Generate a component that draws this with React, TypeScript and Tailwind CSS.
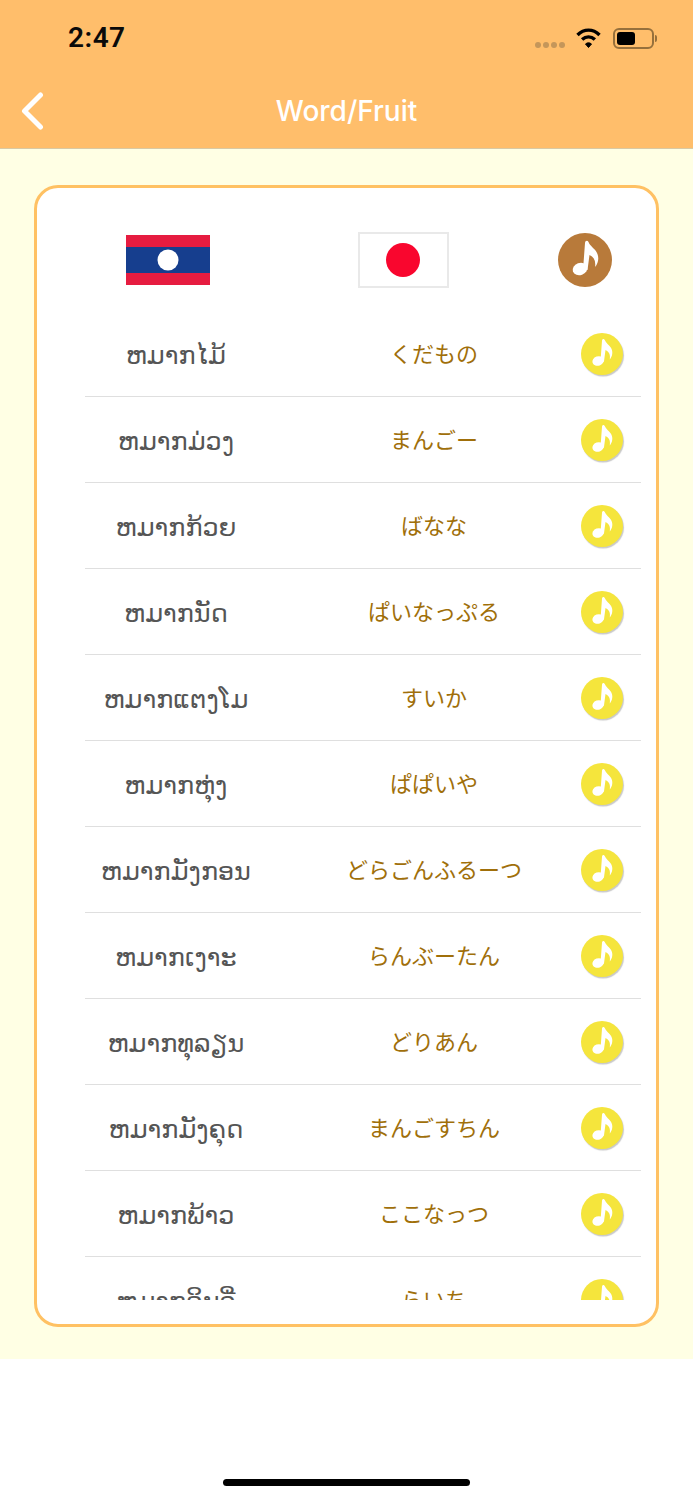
import React from "react";

const WORDS: [string, string][] = [
  ["ຫມາກໄມ້", "くだもの"],
  ["ຫມາກມ່ວງ", "まんごー"],
  ["ຫມາກກ້ວຍ", "ばなな"],
  ["ຫມາກນັດ", "ぱいなっぷる"],
  ["ຫມາກແຕງໂມ", "すいか"],
  ["ຫມາກຫຸ່ງ", "ぱぱいや"],
  ["ຫມາກມັງກອນ", "どらごんふるーつ"],
  ["ຫມາກເງາະ", "らんぶーたん"],
  ["ຫມາກທຸລຽນ", "どりあん"],
  ["ຫມາກມັງຄຸດ", "まんごすちん"],
  ["ຫມາກພ້າວ", "ここなっつ"],
  ["ຫມາກລິນຈີ່", "らいち"],
];

const Note = ({ className }: { className: string }) => (
  <svg viewBox="0 0 54 54" className={className} fill="#fff">
    <ellipse cx="22" cy="36" rx="7.5" ry="6" transform="rotate(-20 22 36)" />
    <path d="M25 37 L27 10 C27.2 7.5 29.5 7 30.5 9 C32 13 36 15 38.5 19 C41.5 24 40.5 30 37 34 C38 28 36 24 31.5 22 L29.5 37 Z" />
  </svg>
);

function Row({ lao, jp }: { lao: string; jp: string }) {
  return (
    <div className="h-[86px] shrink-0 ml-[48px] w-[556px] border-b border-[#dfdfdf] flex items-start">
      <div className="w-[182px] pt-[22px] text-center text-[25.5px] leading-[44px] text-[#555555] font-['DejaVu_Sans',sans-serif] whitespace-nowrap">
        {lao}
      </div>
      <div className="w-[314px] pl-[20px] pt-[24px] text-center text-[22px] leading-[34px] text-[#a06f0a] font-['Noto_Sans_CJK_JP',sans-serif] whitespace-nowrap">
        {jp}
      </div>
      <div className="mt-[22px] w-[42px] h-[42px] rounded-full bg-[#f5e53c] shadow-[1px_1.5px_1px_#c9c9c9]">
        <Note className="w-[42px] h-[42px]" />
      </div>
    </div>
  );
}

export default function App() {
  return (
    <div className="w-[693px] h-[1500px] bg-white flex flex-col font-['Inter',sans-serif]">
      <header className="h-[149px] shrink-0 bg-[#ffbe6b] border-b border-[#d9c9a4] flex flex-col">
        <div className="h-[76px] pl-[68px] pr-[36px] flex items-center justify-between">
          <span className="text-[28px] leading-[34px] font-semibold text-[#0a0a0a] font-['Roboto',sans-serif] tracking-[0.5px]">
            2:47
          </span>
          <div className="flex items-center">
            <div className="flex gap-[2px] mt-[14px] mr-[10px]">
              {[0, 1, 2, 3].map((i) => (
                <span key={i} className="w-[6px] h-[6px] rounded-full bg-[#c4965a]" />
              ))}
            </div>
            <svg viewBox="0 0 26 22" className="w-[27px] h-[22px] mr-[11px]" fill="none" stroke="#000" strokeWidth="3.4">
              <path d="M2 8 C8.5 1.5 17.5 1.5 24 8" />
              <path d="M6.6 12.6 C10.5 9 15.5 9 19.4 12.6" />
              <path d="M10 17 L13 20.5 L16 17 C14.2 15.4 11.8 15.4 10 17 Z" fill="#000" strokeWidth="1" />
            </svg>
            <div className="w-[41px] h-[21px] rounded-[6px] border-2 border-[#96703c] p-[2px]">
              <div className="w-[18px] h-full rounded-[3px] bg-black" />
            </div>
            <div className="w-[2px] h-[7px] ml-[1px] rounded-r-sm bg-[#96703c]" />
          </div>
        </div>
        <div className="grid grid-cols-[1fr_auto_1fr] items-center h-[38px] mt-[16px] pl-[19px]">
          <svg viewBox="0 0 24 38" className="w-[26px] h-[38px]" fill="none" stroke="#fff" strokeWidth="5" strokeLinecap="round" strokeLinejoin="round">
            <path d="M20.5 3 L4.5 19 L20.5 35" />
          </svg>
          <span className="text-[28px] leading-[38px] font-medium text-white -ml-[19px]">Word/Fruit</span>
          <span />
        </div>
      </header>

      <main className="h-[1210px] shrink-0 bg-[#ffffe4] pt-[36px] pl-[34px]">
        <div className="w-[625px] h-[1142px] bg-white rounded-[24px] border-[3px] border-[#ffc163] overflow-hidden">
          <div className="h-[123px] pl-[89px] pt-[20px] flex items-center">
            <svg viewBox="0 0 84 50" className="w-[84px] h-[50px]">
              <rect width="84" height="50" fill="#e61c40" />
              <rect y="12" width="84" height="26" fill="#163e8e" />
              <ellipse cx="42" cy="25" rx="10.5" ry="10.5" fill="#fff" />
            </svg>
            <div className="ml-[148px] w-[91px] h-[56px] border-2 border-[#e9e9e9] bg-white flex items-center justify-center">
              <div className="w-[34px] h-[34px] rounded-full bg-[#f9062e] -ml-[1px]" />
            </div>
            <div className="ml-[109px] w-[54px] h-[54px] rounded-full bg-[#b87a3a]">
              <Note className="w-[54px] h-[54px]" />
            </div>
          </div>
          <div className="h-[989px] overflow-hidden flex flex-col">
            {WORDS.map(([lao, jp]) => (
              <Row key={lao} lao={lao} jp={jp} />
            ))}
          </div>
        </div>
      </main>

      <div className="flex-1 flex items-end justify-center pb-[14px]">
        <div className="w-[247px] h-[7px] rounded-full bg-black" />
      </div>
    </div>
  );
}
